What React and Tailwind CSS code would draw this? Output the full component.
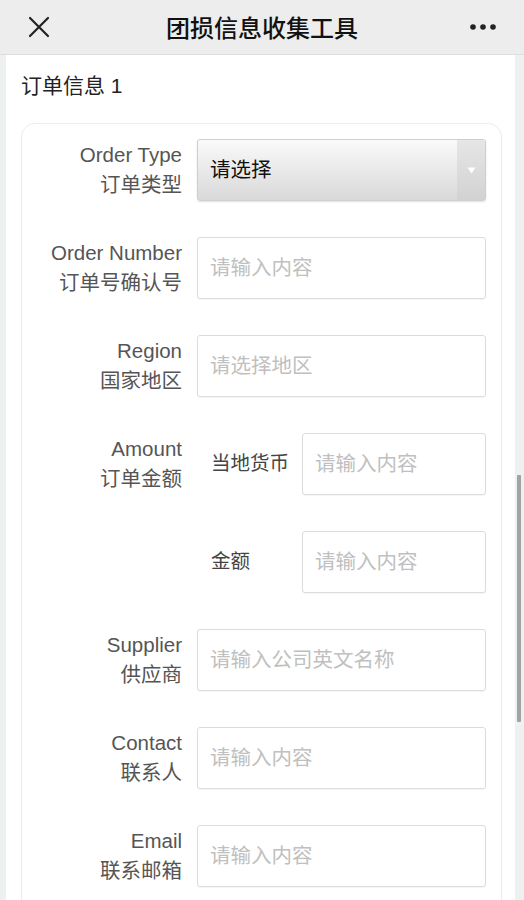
import React from "react";

const font = { fontFamily: '"Liberation Sans", "Noto Sans CJK SC", sans-serif' };

function Label({ en, zh }) {
  return (
    <div className="w-[175px] shrink-0 pr-[15px] text-right text-[20.5px] leading-[30px] text-[#555] pt-[1px]">
      <div>{en}</div>
      <div>{zh}</div>
    </div>
  );
}

function Input({ placeholder }) {
  return (
    <div className="flex-1 h-[62px] border border-[#dcdcdc] rounded-[3px] bg-white flex items-center pl-[12px] text-[20.5px] text-[#c0c0c0] shadow-[0_1px_1px_rgba(0,0,0,0.04)]">
      {placeholder}
    </div>
  );
}

function Row({ en, zh, children }) {
  return (
    <div className="flex items-start">
      <Label en={en} zh={zh} />
      {children}
    </div>
  );
}

export default function App() {
  return (
    <div className="w-[524px] h-[900px] overflow-hidden bg-white relative" style={font}>
      {/* Header */}
      <div className="h-[55px] bg-[#ededed] border-b border-[#dedede] flex items-center justify-between px-[28px] relative">
        <svg width="22" height="22" viewBox="0 0 22 22">
          <path d="M2 2 L20 20 M20 2 L2 20" stroke="#222" strokeWidth="2.2" strokeLinecap="round" />
        </svg>
        <div className="absolute left-0 right-0 text-center text-[24px] font-medium text-[#111] pointer-events-none" style={{ fontFamily: '"Noto Sans CJK SC", sans-serif' }}>
          团损信息收集工具
        </div>
        <svg width="26" height="8" viewBox="0 0 26 8">
          <circle cx="3" cy="4" r="2.8" fill="#222" />
          <circle cx="13" cy="4" r="2.8" fill="#222" />
          <circle cx="23" cy="4" r="2.8" fill="#222" />
        </svg>
      </div>

      <div className="flex h-[845px]">
        <div className="w-[6px] bg-[#eef1f1]" />
        <div className="flex-1">
          <div className="pl-[15px] pt-[16px] h-[68px] text-[21px] leading-[30px] text-[#222]">
            订单信息 1
          </div>
          <div className="ml-[15px] mr-[13px] border border-[#ececec] rounded-[14px] pt-[15px] pr-[15px] pb-[30px] flex flex-col gap-[36px]">
            <Row en="Order Type" zh="订单类型">
              <div className="flex-1 h-[62px] border border-[#cfcfcf] rounded-[3px] flex bg-gradient-to-b from-[#fafafa] to-[#d9d9d9] shadow-[0_1px_2px_rgba(0,0,0,0.12)] overflow-hidden">
                <div className="flex-1 flex items-center pl-[12px] text-[20.5px] text-[#111]">请选择</div>
                <div className="w-[28px] flex items-center justify-center bg-gradient-to-b from-[#e6e6e6] to-[#d2d2d2]">
                  <svg width="9" height="7" viewBox="0 0 9 7">
                    <path d="M0.5 0.5 L8.5 0.5 L4.5 6.5 Z" fill="#fff" />
                  </svg>
                </div>
              </div>
            </Row>
            <Row en="Order Number" zh="订单号确认号">
              <Input placeholder="请输入内容" />
            </Row>
            <Row en="Region" zh="国家地区">
              <Input placeholder="请选择地区" />
            </Row>
            <Row en="Amount" zh="订单金额">
              <div className="flex-1 flex flex-col gap-[36px]">
                <div className="flex items-center">
                  <div className="w-[105px] shrink-0 pl-[14px] text-[19.5px] text-[#444]">当地货币</div>
                  <Input placeholder="请输入内容" />
                </div>
                <div className="flex items-center">
                  <div className="w-[105px] shrink-0 pl-[14px] text-[19.5px] text-[#444]">金额</div>
                  <Input placeholder="请输入内容" />
                </div>
              </div>
            </Row>
            <Row en="Supplier" zh="供应商">
              <Input placeholder="请输入公司英文名称" />
            </Row>
            <Row en="Contact" zh="联系人">
              <Input placeholder="请输入内容" />
            </Row>
            <Row en="Email" zh="联系邮箱">
              <Input placeholder="请输入内容" />
            </Row>
          </div>
        </div>
        <div className="w-[9px] bg-[#eef1f1] relative">
          <div className="absolute left-[2px] top-[420px] w-[4px] h-[247px] bg-[#a3a3a3] rounded-[1px]" />
        </div>
      </div>
    </div>
  );
}
